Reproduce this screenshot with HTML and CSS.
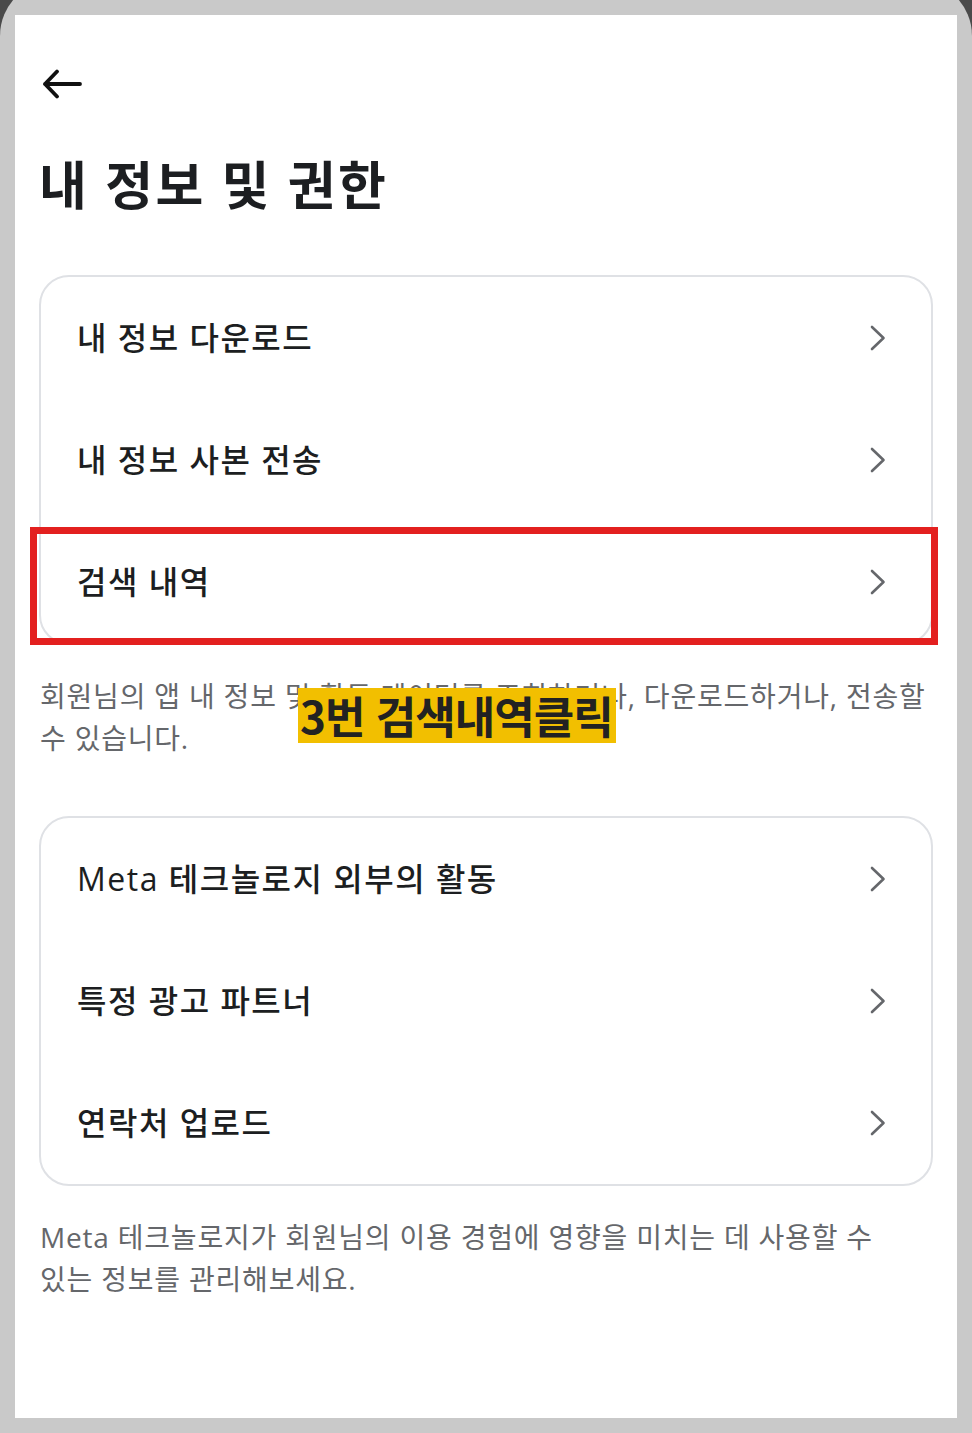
FILE: index.html
```html
<!DOCTYPE html>
<html lang="ko">
<head>
<meta charset="utf-8">
<title>내 정보 및 권한</title>
<link rel="stylesheet" href="styles.css">
</head>
<body>
<div class="device">
  <div class="screen">
    <div class="topbar">
      <svg class="back" width="40" height="30" viewBox="0 0 40 30" aria-hidden="true">
        <path d="M3 15 H38 M15 2.5 L3 15 L15 27.5" fill="none" stroke="#111" stroke-width="3.8" stroke-linecap="round" stroke-linejoin="round"/>
      </svg>
    </div>
    <h1 class="title">내 정보 및 권한</h1>

    <div class="card">
      <div class="row"><span class="label">내 정보 다운로드</span><svg class="chev" width="20" height="28" viewBox="0 0 20 28"><path d="M4 3 L15.5 14 L4 25" fill="none" stroke="#65676b" stroke-width="2.6" stroke-linecap="round" stroke-linejoin="round"/></svg></div>
      <div class="row"><span class="label">내 정보 사본 전송</span><svg class="chev" width="20" height="28" viewBox="0 0 20 28"><path d="M4 3 L15.5 14 L4 25" fill="none" stroke="#65676b" stroke-width="2.6" stroke-linecap="round" stroke-linejoin="round"/></svg></div>
      <div class="row"><span class="label">검색 내역</span><svg class="chev" width="20" height="28" viewBox="0 0 20 28"><path d="M4 3 L15.5 14 L4 25" fill="none" stroke="#65676b" stroke-width="2.6" stroke-linecap="round" stroke-linejoin="round"/></svg></div>
    </div>
    <p class="desc">회원님의 앱 내 정보 및 활동 데이터를 조회하거나, 다운로드하거나, 전송할<br>수 있습니다.</p>

    <div class="card card-second">
      <div class="row"><span class="label">Meta 테크놀로지 외부의 활동</span><svg class="chev" width="20" height="28" viewBox="0 0 20 28"><path d="M4 3 L15.5 14 L4 25" fill="none" stroke="#65676b" stroke-width="2.6" stroke-linecap="round" stroke-linejoin="round"/></svg></div>
      <div class="row"><span class="label">특정 광고 파트너</span><svg class="chev" width="20" height="28" viewBox="0 0 20 28"><path d="M4 3 L15.5 14 L4 25" fill="none" stroke="#65676b" stroke-width="2.6" stroke-linecap="round" stroke-linejoin="round"/></svg></div>
      <div class="row"><span class="label">연락처 업로드</span><svg class="chev" width="20" height="28" viewBox="0 0 20 28"><path d="M4 3 L15.5 14 L4 25" fill="none" stroke="#65676b" stroke-width="2.6" stroke-linecap="round" stroke-linejoin="round"/></svg></div>
    </div>
    <p class="desc desc-second">Meta 테크놀로지가 회원님의 이용 경험에 영향을 미치는 데 사용할 수<br>있는 정보를 관리해보세요.</p>

    <div class="highlight" aria-hidden="true"></div>
    <div class="tag">3번 검색내역클릭</div>
  </div>
</div>
</body>
</html>
```

FILE: styles.css
```css
html, body {
  margin: 0;
  padding: 0;
  background: #4a4a4a;
  overflow: hidden;
}
body {
  font-family: "Open Sans", "Noto Sans CJK KR", sans-serif;
  color: #1c1e21;
}
.device {
  box-sizing: border-box;
  margin-top: -20px;
  height: 1453px;
  padding: 35px 15px 15px;
  background: #c9c9c9;
  border-radius: 56px 56px 0 0;
}
.screen {
  position: relative;
  box-sizing: border-box;
  height: 1403px;
  background: #ffffff;
  padding: 0 24px;
}
.topbar {
  padding-top: 54px;
  height: 30px;
  display: flex;
  padding-left: 3px;
}
.back {
  display: block;
}
.title {
  margin: 56px 0 0 0;
  font-size: 52px;
  line-height: 60px;
  font-weight: 700;
  color: #1c1e21;
  letter-spacing: 2.4px;
}
.card {
  margin-top: 60px;
  border: 2px solid #dfe1e5;
  border-radius: 30px;
  display: flex;
  flex-direction: column;
}
.card-second {
  margin-top: 57px;
}
.row {
  height: 122px;
  display: flex;
  align-items: center;
  justify-content: space-between;
  padding: 0 43px 0 36px;
}
.label {
  font-size: 32px;
  line-height: 40px;
  font-weight: 500;
  letter-spacing: 1.5px;
  color: #1c1e21;
}
.chev {
  display: block;
  flex: none;
}
.desc {
  margin: 30px 0 0 1px;
  font-size: 28px;
  line-height: 42px;
  letter-spacing: 0.8px;
  color: #65676b;
  font-weight: 400;
  white-space: nowrap;
}
.highlight {
  position: absolute;
  left: 15px;
  top: 512px;
  width: 908px;
  height: 118px;
  box-sizing: border-box;
  border: 7px solid #e3201f;
}
.tag {
  position: absolute;
  left: 283px;
  top: 673px;
  width: 318px;
  height: 55px;
  background: #f2bf00;
  color: #222222;
  font-family: "Noto Sans CJK KR", sans-serif;
  font-weight: 700;
  font-size: 44px;
  line-height: 55px;
  letter-spacing: -1px;
  padding-left: 2px;
  box-sizing: border-box;
  white-space: nowrap;
  overflow: hidden;
}
```
